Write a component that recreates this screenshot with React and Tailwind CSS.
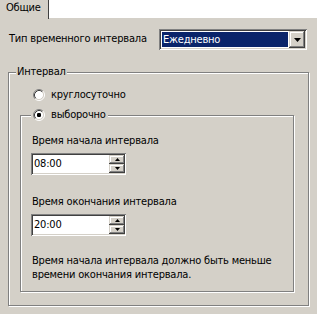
const sunken =
  "shadow-[inset_1px_1px_0_#808080,inset_-1px_-1px_0_#fff,inset_2px_2px_0_#404040,inset_-2px_-2px_0_#d4d0c8]";
const raised =
  "shadow-[inset_-1px_-1px_0_#404040,inset_1px_1px_0_#d4d0c8,inset_-2px_-2px_0_#808080,inset_2px_2px_0_#fff]";
const etched = "border border-[#808080] shadow-[1px_1px_0_#fff,inset_1px_1px_0_#fff]";

function Radio({ checked }) {
  return (
    <svg width="12" height="12" viewBox="0 0 12 12" className="shrink-0">
      <circle cx="6" cy="6" r="4.5" fill="#fff" />
      <path d="M2.11 9.89 A5.5 5.5 0 0 1 9.89 2.11" fill="none" stroke="#808080" />
      <path d="M9.89 2.11 A5.5 5.5 0 0 1 2.11 9.89" fill="none" stroke="#fff" />
      <path d="M2.82 9.18 A4.5 4.5 0 0 1 9.18 2.82" fill="none" stroke="#404040" />
      <path d="M9.18 2.82 A4.5 4.5 0 0 1 2.82 9.18" fill="none" stroke="#d4d0c8" />
      {checked && <rect x="4" y="4" width="4" height="4" rx="1.2" fill="#000" />}
    </svg>
  );
}

function SpinBtn({ up }) {
  return (
    <div className={`flex-1 flex items-center justify-center bg-[#d4d0c8] ${raised}`}>
      <svg width="5" height="3" viewBox="0 0 5 3">
        <path d={up ? "M2.5 0 L5 3 L0 3 Z" : "M0 0 L5 0 L2.5 3 Z"} fill="#000" />
      </svg>
    </div>
  );
}

function Spin({ value }) {
  return (
    <div className={`flex w-[95px] h-[22px] bg-white p-[2px] ${sunken}`}>
      <div className="flex-1 pl-[1px] leading-[18px]">{value}</div>
      <div className="flex flex-col w-[16px] -mr-[1px]">
        <SpinBtn up />
        <SpinBtn />
      </div>
    </div>
  );
}

export default function App() {
  return (
    <div className="w-[317px] h-[314px] bg-[#d4d0c8] text-[11px] tracking-[-0.2px] text-black font-['DejaVu_Sans_Condensed','Liberation_Sans',sans-serif] overflow-hidden">
      {/* tab strip */}
      <div className="flex items-start h-[18px]">
        <div className="w-[49px] h-[19px] border-r border-[#404040] pl-[6px] pt-[1px] leading-[14px] relative z-10 bg-[#d4d0c8]">
          Общие
        </div>
        <div className="flex-1 h-[18px] bg-white" />
      </div>

      {/* combo row */}
      <div className="flex items-center mt-[11px] pl-[9px] pr-[10px]">
        <span>Тип временного интервала</span>
        <div className={`ml-auto flex w-[148px] h-[21px] bg-white p-[2px] ${sunken}`}>
          <div className="flex-1 m-[1px] bg-[#0a246a] text-white pl-[1px] leading-[15px]">Ежедневно</div>
          <div className={`w-[16px] flex items-center justify-center bg-[#d4d0c8] ${raised}`}>
            <svg width="7" height="4" viewBox="0 0 7 4">
              <path d="M0 0 L7 0 L3.5 4 Z" fill="#000" />
            </svg>
          </div>
        </div>
      </div>

      {/* outer group */}
      <div className={`relative mt-[22px] ml-[8px] w-[301px] h-[234px] ${etched}`}>
        <span className="absolute left-[7px] -top-[8px] px-[1px] bg-[#d4d0c8] leading-[14px]">Интервал</span>

        <div className="flex items-center gap-[6px] mt-[15px] ml-[24px] leading-[14px]">
          <Radio />
          <span>круглосуточно</span>
        </div>

        {/* inner group */}
        <div className={`relative mt-[13px] ml-[11px] w-[274px] h-[177px] ${etched}`}>
          <div className="absolute left-[10px] -top-[8px] flex items-center gap-[6px] pl-[2px] pr-[2px] bg-[#d4d0c8] leading-[14px]">
            <Radio checked />
            <span>выборочно</span>
          </div>

          <div className="pl-[11px] pt-[18px]">
            <div className="leading-[14px]">Время начала интервала</div>
            <div className="mt-[5px] -ml-[1px]">
              <Spin value="08:00" />
            </div>
            <div className="mt-[20px] leading-[14px]">Время окончания интервала</div>
            <div className="mt-[5px] -ml-[1px]">
              <Spin value="20:00" />
            </div>
            <div className="mt-[18px] leading-[14px]">
              Время начала интервала должно быть меньше
              <br />
              времени окончания интервала.
            </div>
          </div>
        </div>
      </div>
    </div>
  );
}
